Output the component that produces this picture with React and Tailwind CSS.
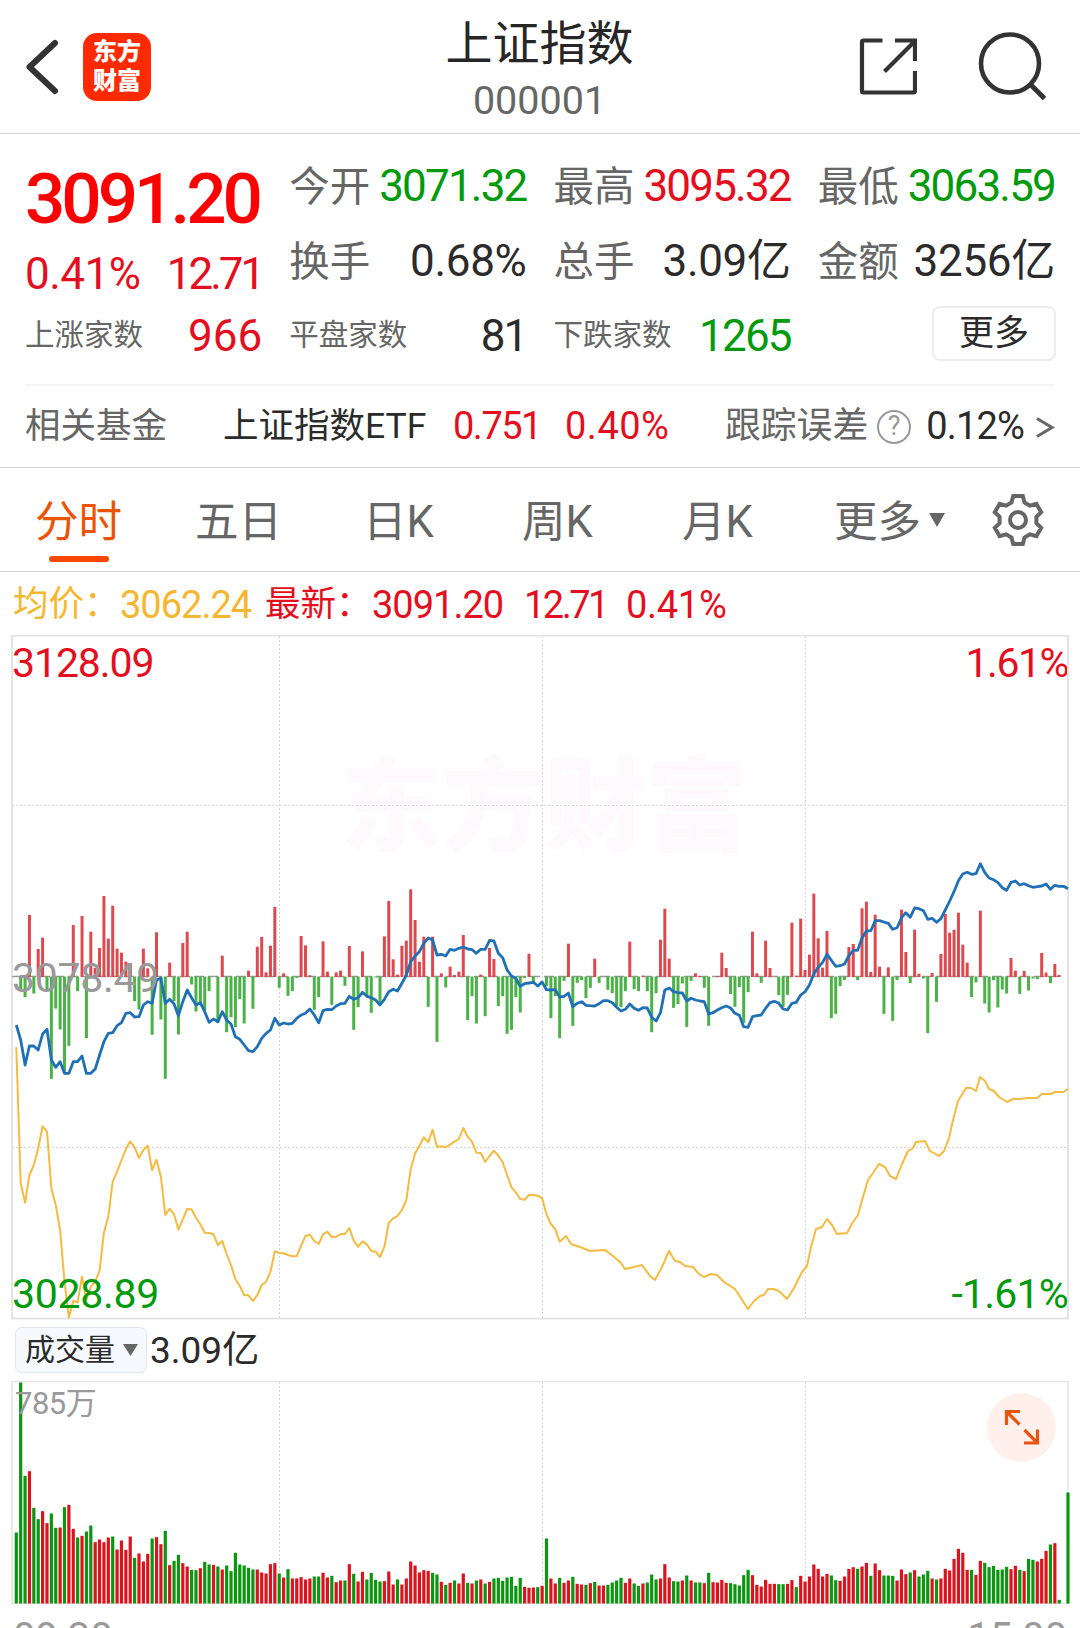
import React from "react";
import clsx from "clsx";

const STEP = 4.382;
const FIRST_X = 16.3;

// All series hold one value per trading minute, in thirds of a pixel.
const MOMENTUM = [
  0, -41, -62, 186, -51, 84, 118, -42, -307, -96,
  -159, -286, -208, 156, -44, 183, -185, 136, 27, 87,
  243, 115, 214, 85, 73, 46, 42, -74, -99, 85,
  26, -175, 134, -129, -307, 43, -74, -174, 102, 136,
  -24, -105, -81, -101, -44, 0, -139, 64, -167, -122,
  -152, -68, -141, 19, -97, 91, 120, 14, 94, 210,
  -34, 11, -58, -44, -4, 123, 95, 5, -100, -62,
  107, 16, -85, 14, 19, -28, 93, -160, -92, 77,
  -61, -109, -3, -78, 122, 228, 53, 7, 94, 109,
  263, 171, 46, 121, -91, 121, -196, 11, -33, 31,
  6, 16, 126, -131, -59, -141, 7, -119, 87, 54,
  -89, -59, -172, -160, -62, -108, -5, 70, -16, 0,
  0, -29, -125, -59, -185, -13, 100, -148, -19, -11,
  -65, -34, 55, -19, 0, -40, -50, -89, -92, -44,
  106, -38, -44, 4, -44, -167, -50, 112, 205, 55,
  -94, -83, -21, -151, -13, 11, 3, -34, -148, 0,
  3, 73, 27, -53, -91, -32, -139, -47, 136, 11,
  -19, 109, 27, 0, -56, -91, -55, 163, 4, 175,
  21, 67, 250, 116, 28, 138, -125, -112, -29, -11,
  90, 99, -11, 206, 226, 15, 187, 31, -112, 29,
  -133, -11, 202, 75, -20, 142, 10, -6, -170, 12,
  -76, 69, 189, 133, 142, 193, 97, 43, -62, -18,
  199, -81, -108, -11, -93, -39, -51, 57, 19, -52,
  18, -42, -6, -8, 72, 13, -20, 39, 6, 0, 0,
];

const PRICE = [
  495, 540, 615, 558, 558, 570, 522, 508, 600, 622,
  605, 640, 640, 605, 605, 588, 640, 640, 627, 585,
  545, 520, 518, 497, 488, 460, 458, 471, 470, 435,
  425, 430, 360, 355, 430, 418, 432, 467, 425, 390,
  413, 435, 428, 455, 487, 477, 485, 455, 480, 492,
  530, 538, 555, 572, 575, 560, 535, 520, 510, 475,
  495, 489, 492, 490, 475, 465, 460, 447, 465, 488,
  452, 448, 449, 438, 431, 430, 409, 418, 413, 397,
  409, 413, 420, 435, 418, 395, 388, 393, 370, 345,
  305, 288, 275, 250, 234, 240, 285, 283, 288, 268,
  271, 265, 261, 267, 269, 280, 268, 268, 241, 243,
  280, 293, 330, 348, 355, 379, 371, 369, 367, 378,
  366, 389, 390, 389, 411, 409, 399, 440, 430, 425,
  436, 437, 438, 431, 422, 422, 428, 442, 453, 448,
  432, 445, 451, 443, 444, 472, 483, 458, 390, 384,
  395, 398, 399, 423, 415, 420, 423, 425, 462, 458,
  450, 443, 438, 444, 460, 466, 500, 502, 470, 467,
  465, 445, 428, 424, 430, 447, 450, 430, 427, 405,
  395, 375, 342, 322, 307, 283, 301, 319, 317, 312,
  287, 271, 271, 235, 213, 212, 182, 182, 186, 190,
  208, 203, 173, 158, 172, 144, 146, 152, 178, 175,
  187, 176, 150, 123, 95, 62, 42, 37, 43, 41,
  11, 37, 54, 59, 68, 83, 91, 67, 63, 75,
  71, 77, 82, 80, 78, 72, 88, 76, 79, 79, 86,
];

const AVERAGE = [
  -38, 370, 428, 345, 315, 265, 199, 215, 385, 435,
  510, 665, 773, 722, 728, 650, 720, 680, 665, 632,
  518, 470, 365, 335, 300, 268, 244, 262, 294, 270,
  257, 330, 299, 350, 465, 446, 463, 509, 478, 447,
  448, 473, 493, 518, 519, 523, 555, 543, 582, 615,
  658, 678, 706, 706, 723, 705, 675, 665, 635, 574,
  579, 580, 585, 589, 589, 557, 528, 524, 543, 552,
  523, 515, 531, 530, 522, 522, 503, 542, 560, 544,
  553, 573, 575, 591, 560, 488, 475, 468, 450, 420,
  328, 280, 258, 232, 247, 209, 260, 259, 262, 254,
  245, 237, 204, 230, 245, 278, 279, 306, 288, 272,
  287, 307, 345, 382, 397, 417, 419, 405, 405, 407,
  415, 463, 492, 508, 545,
];

// Afternoon part of the average line, as [x, y] inside the chart.
const AVERAGE_TAIL = [
  [566, 601], [571, 609], [580, 612], [590, 616], [605, 615], [613, 621],
  [621, 628], [625, 634], [634, 632], [642, 630], [650, 641], [655, 645],
  [662, 632], [669, 616], [675, 626], [680, 627], [685, 631], [693, 632],
  [699, 639], [704, 642], [711, 639], [717, 640], [724, 647], [735, 654],
  [741, 663], [748, 674], [754, 666], [760, 661], [764, 660], [768, 654],
  [773, 654], [779, 656], [787, 664], [794, 653], [802, 637], [807, 631],
  [811, 612], [816, 594], [822, 592], [827, 584], [832, 590], [837, 599],
  [847, 598], [853, 587], [858, 580], [863, 562], [868, 545], [873, 538],
  [879, 529], [885, 532], [890, 541], [896, 544], [902, 529], [908, 516],
  [913, 513], [916, 507], [925, 506], [930, 516], [939, 521], [944, 516],
  [949, 503], [953, 485], [958, 466], [966, 453], [971, 453], [976, 456],
  [980, 442], [985, 446], [989, 454], [994, 456], [999, 462], [1007, 467],
  [1013, 464], [1020, 464], [1028, 463], [1037, 463], [1042, 459],
  [1051, 459], [1055, 457], [1063, 457], [1068, 454],
];

// Positive values close up (red), negative ones close down (green).
const VOLUME = [
  -213, -663, -383, 397, -287, -253, 277, 241, -270, -227,
  228, -289, 296, 224, -198, 203, -216, -234, 184, 192,
  184, 198, -201, 162, 189, 161, 201, -137, 150, 126,
  149, -195, 199, 178, -218, 115, -128, -146, 121, 111,
  -101, -100, 106, -125, -117, 116, -111, 102, -114, -97,
  -152, -117, -114, -107, -102, 102, 93, 90, 118, 121,
  -90, 78, -103, 75, 75, 79, 72, 75, -81, -81,
  92, 78, -83, 64, 69, -69, 118, -89, 66, 95,
  -72, -92, -71, -66, 67, 96, 57, -72, 57, 75,
  126, 114, 93, 100, 98, -92, -87, 65, -56, 62,
  -69, 60, 90, -62, 60, -69, 72, -60, 65, -75,
  -77, -68, -78, -80, -53, -77, 50, 47, 48, -49,
  53, -195, 75, 60, -77, 62, 69, -80, 59, 57,
  -56, 61, -65, 54, 54, -56, -63, -69, -77, 62,
  75, -60, -53, 60, -63, -87, -72, 75, 118, 78,
  -67, -66, 69, -84, 69, -63, -63, 61, -92, 64,
  63, 71, 62, -61, -58, -54, -85, -101, 85, 56,
  51, 71, 59, 59, -58, -58, 59, 70, -49, 83,
  66, 81, 117, 104, 81, 89, -84, -70, 68, 81,
  104, 109, -104, 111, 122, -83, 120, 100, -84, -84,
  -83, 69, 102, 88, -93, 100, -81, -87, -98, 75,
  -72, 75, 104, 99, 134, 164, 152, 101, -101, 86,
  128, -122, -109, -113, -101, -102, -110, 103, 113, -101,
  97, -134, -131, 126, 134, 158, -177, 181, -11, 0, -333,
];

const xAt = (i) => FIRST_X + i * STEP;

const toPoints = (series, top) =>
  series.map((v, i) => `${xAt(i).toFixed(1)},${(top + v / 3).toFixed(1)}`).join(" ");

// Six-toothed outline around 0,0
const gearPoints = Array.from({ length: 6 }, (_, k) => {
  const a = (k * Math.PI) / 3;
  return [[-6.5, -17.5], [-4.8, -24], [4.8, -24], [6.5, -17.5]]
    .map(([x, y]) =>
      [x * Math.cos(a) - y * Math.sin(a), x * Math.sin(a) + y * Math.cos(a)]
        .map((n) => n.toFixed(2))
        .join(",")
    )
    .join(" ");
}).join(" ");

const STATS = [
  [
    { label: "今开", value: "3071.32", color: "text-[#009a0c]", tight: true },
    { label: "换手", value: "0.68%", color: "text-[#2b2b2b]" },
    { label: "平盘家数", value: "81", color: "text-[#2b2b2b]", small: true, tight: true },
  ],
  [
    { label: "最高", value: "3095.32", color: "text-[#e30f20]", tight: true },
    { label: "总手", value: "3.09亿", color: "text-[#2b2b2b]" },
    { label: "下跌家数", value: "1265", color: "text-[#009a0c]", small: true, tight: true },
  ],
  [
    { label: "最低", value: "3063.59", color: "text-[#009a0c]", tight: true },
    { label: "金额", value: "3256亿", color: "text-[#2b2b2b]" },
  ],
];

function Header() {
  return (
    <header className="flex h-[134px] items-center border-b border-[#d4d4d4] pl-[24px] pr-[32px]">
      <div className="flex w-[300px] items-center">
        <svg width="36" height="56" viewBox="0 0 36 56" fill="none" stroke="#333" strokeWidth="6" strokeLinecap="round" strokeLinejoin="round">
          <path d="M31 4 5.500 28l25.500 24" />
        </svg>
        <div className="ml-[23px] flex h-[68px] w-[68px] flex-col items-center justify-center rounded-[14px] bg-[#ff2a00] text-[24px] font-black leading-[29px] text-white">
          <span>东方</span>
          <span>财富</span>
        </div>
      </div>
      <div className="flex flex-1 flex-col items-center pl-[7px] pt-[9px]">
        <h1 className="text-[47px] font-normal leading-[60px] text-[#262626]">上证指数</h1>
        <p className="text-[39.500px] leading-[54px] text-[#666]">000001</p>
      </div>
      <div className="flex w-[300px] items-center justify-end">
        <svg width="60" height="60" viewBox="0 0 60 60" fill="none" stroke="#333" strokeWidth="4.2">
          <path d="M25.500 3.500H6.500A1.500 1.500 0 0 0 5 5V54a1.500 1.500 0 0 0 1.500 1.500h50A1.500 1.500 0 0 0 58 54V34" />
          <path d="M38 3.500h20v20.500M27.500 34.500 57.500 4.500" />
        </svg>
        <svg className="ml-[61px]" width="70" height="70" viewBox="0 0 70 70" fill="none" stroke="#333" strokeWidth="4.6">
          <circle cx="32" cy="31.500" r="29" />
          <path d="M52 52 66.500 66.500" strokeWidth="5" />
        </svg>
      </div>
    </header>
  );
}

function Stat({ label, value, color, small, tight }) {
  return (
    <div className="flex h-[75px] items-center justify-between whitespace-nowrap">
      <span className={clsx("text-[#666]", small ? "text-[29.5px]" : "pt-[3px] text-[40.5px]")}>{label}</span>
      <span className={clsx("pt-px text-[44px]", tight ? "tracking-[-1.8px]" : "tracking-[-0.3px]", color)}>{value}</span>
    </div>
  );
}

function Quote() {
  return (
    <section className="border-b border-[#d4d4d4]">
      <div className="grid h-[250px] grid-cols-4 gap-x-[27px] px-[25px] pt-[14px]">
        <div className="flex flex-col whitespace-nowrap pt-[12px] text-[#e30f20]">
          <div className="flex h-[75px] items-center pt-[4px] text-[71px] font-medium tracking-[-4px] text-[#ff0000]">3091.20</div>
          <div className="flex h-[75px] items-center justify-between pt-[2px] text-[44px]">
            <span className="tracking-[-0.500px]">0.41%</span>
            <span className="tracking-[-3px]">12.71</span>
          </div>
          <div className="flex h-[51px] items-center justify-between">
            <span className="text-[29.5px] text-[#666]">上涨家数</span>
            <span className="pt-px text-[44px]">966</span>
          </div>
        </div>
        {STATS.map((column, i) => (
          <div key={i} className="flex flex-col">
            {column.map((stat) => (
              <Stat key={stat.label} {...stat} />
            ))}
            {i === 2 && (
              <button className="-mr-px ml-auto mt-[8px] h-[55px] w-[124px] rounded-[8px] border-2 border-[#ededf0] text-[35px] leading-[52px] text-[#2b2b2b]">
                更多
              </button>
            )}
          </div>
        ))}
      </div>
      <div className="mx-[25px] flex h-[83px] items-center whitespace-nowrap border-t-2 border-[#f5f5f5] text-[38px] tracking-[-0.8px]">
        <span className="text-[35.500px] tracking-normal text-[#666]">相关基金</span>
        <span className="ml-[56px] w-[230px] text-[35.500px] tracking-normal text-[#2b2b2b]">上证指数ETF</span>
        <span className="w-[112px] tracking-[-1.500px] text-[#e30f20]">0.751</span>
        <span className="w-[160px] tracking-[0.500px] text-[#e30f20]">0.40%</span>
        <span className="text-[35.800px] tracking-normal text-[#666]">跟踪误差</span>
        <span className="ml-[9px] flex h-[34px] w-[34px] items-center justify-center rounded-full border-[2.500px] border-[#999] text-[27px] tracking-normal text-[#999]">?</span>
        <span className="ml-[15px] text-[#2b2b2b]">0.12%</span>
        <svg className="ml-auto" width="20" height="24" viewBox="0 0 20 24" fill="none" stroke="#666" strokeWidth="3">
          <path d="M2 3.500 17 12.500 2 21.500" />
        </svg>
      </div>
    </section>
  );
}

function Tabs() {
  return (
    <nav className="flex h-[104px] items-center whitespace-nowrap border-b border-[#d4d4d4] pl-[35px] text-[43.500px] text-[#666]">
      <div className="relative w-[160px] pt-[6px] text-[#ea5504]">
        分时
        <span className="absolute -bottom-[7px] left-[14px] h-[6px] w-[60px] rounded-full bg-[#f84800]" />
      </div>
      <div className="w-[168px] pt-[6px]">五日</div>
      <div className="w-[159px] pt-[6px]">日K</div>
      <div className="w-[160px] pt-[6px]">周K</div>
      <div className="w-[152px] pt-[6px]">月K</div>
      <div className="flex w-[157px] items-center">
        <span className="pt-[6px]">更多</span>
        <svg className="ml-[8px]" width="16" height="14" viewBox="0 0 16 14">
          <path d="M0 0h16L8 14z" fill="#666" />
        </svg>
      </div>
      <svg width="54" height="54" viewBox="-27 -27 54 54" fill="none" stroke="#666" strokeWidth="4">
        <polygon points={gearPoints} />
        <circle r="8" />
      </svg>
    </nav>
  );
}

function PriceChart() {
  const tail = AVERAGE_TAIL.map((p) => p.join(",")).join(" ");
  return (
    <div className="relative h-[685px] text-[41px] leading-[48px] tracking-[-0.8px]">
      <div className="absolute left-[340px] top-[98px] text-[102px] font-black leading-[150px] tracking-normal text-[#fdf9fc]">东方财富</div>
      <span className="absolute left-[12px] top-[4px] tracking-[-1.100px] text-[#e30f20]">3128.09</span>
      <span className="absolute right-[12px] top-[4px] tracking-[-1.500px] text-[#e30f20]">1.61%</span>
      <svg className="absolute left-0 top-0" width="1080" height="685" viewBox="0 0 1080 685" fill="none">
        <g stroke="#d6d6d6" strokeDasharray="2 2">
          <path d="M279.500 1v682M542.500 1v682M805.500 1v682M12 170.500h1056M12 512.500h1056" />
        </g>
        <rect x="12" y="0.500" width="1056" height="683" stroke="#e4e4e4" strokeWidth="2" />
        <path d="M12 341.500h1050" stroke="#999" strokeWidth="1.500" strokeDasharray="10 4" />
        {MOMENTUM.map((v, i) =>
          v === 0 ? null : (
            <rect
              key={i}
              x={xAt(i) - 1.5}
              y={v > 0 ? 342 - v / 3 : 341.5}
              width="3"
              height={Math.abs(v) / 3}
              fill={v > 0 ? "#dc4a50" : "#4bb148"}
            />
          )
        )}
        <polyline points={`${toPoints(AVERAGE, 425)} ${tail}`} stroke="#f4bb42" strokeWidth="2" strokeLinejoin="round" />
        <polyline points={toPoints(PRICE, 225)} stroke="#1f70b4" strokeWidth="2.800" strokeLinejoin="round" />
      </svg>
      <span className="absolute left-[12px] top-[319px] tracking-[-0.300px] text-[#999]">3078.49</span>
      <span className="absolute bottom-[2px] left-[12px] tracking-[-0.300px] text-[#009a0c]">3028.89</span>
      <span className="absolute bottom-[2px] right-[12px] text-[#009a0c]">-1.61%</span>
    </div>
  );
}

function VolumeChart() {
  return (
    <div className="relative h-[223px]">
      <svg className="block" width="1080" height="223" viewBox="0 0 1080 223" fill="none">
        <path d="M279.500 1v221M542.500 1v221M805.500 1v221" stroke="#d6d6d6" strokeDasharray="2 2" />
        <rect x="12" y="0.500" width="1056" height="222" stroke="#e4e4e4" strokeWidth="1.500" />
        {VOLUME.map((v, i) => (
          <rect
            key={i}
            x={xAt(i) - 1.6}
            y={222.5 - Math.abs(v) / 3}
            width="3.200"
            height={Math.abs(v) / 3}
            fill={v > 0 ? "#d9141f" : "#0b9510"}
          />
        ))}
      </svg>
      <span className="absolute left-[15px] top-[3px] text-[31px] leading-[40px] tracking-[-0.500px] text-[#999]">785万</span>
      <button className="absolute right-[24px] top-[12px] h-[69px] w-[69px] rounded-full bg-[#fff0eb]">
        <svg width="69" height="69" viewBox="0 0 69 69" fill="none" stroke="#e9530c" strokeWidth="3.200">
          <path d="M33 18.500H19.500V32M20 19l12.500 12.500M50.500 36.500V50H37M50 49.500 37.500 37" />
        </svg>
      </button>
    </div>
  );
}

export default function App() {
  return (
    <main className="h-[1628px] w-[1080px] overflow-hidden bg-white font-['Roboto','Noto_Sans_CJK_SC',sans-serif]">
      <Header />
      <Quote />
      <Tabs />
      <div className="flex h-[63px] items-center whitespace-nowrap pl-[13px] pt-[3px] text-[38px] tracking-[-1px] text-[#e30f20]">
        <span className="w-[107px] text-[35.500px] tracking-normal text-[#f5b731]">均价：</span>
        <span className="w-[145px] text-[#f5b731]">3062.24</span>
        <span className="w-[107px] text-[35.500px] tracking-normal">最新：</span>
        <span className="w-[152px]">3091.20</span>
        <span className="w-[102px] tracking-[-2.500px]">12.71</span>
        <span className="tracking-[-0.300px]">0.41%</span>
      </div>
      <PriceChart />
      <div className="flex h-[61px] items-center pl-[15px]">
        <button className="-mt-[2px] flex h-[46px] w-[132px] items-center rounded-[7px] border border-[#e0e6ee] bg-[#f6faff] pl-[9px] text-[30px] text-[#2b2b2b]">
          成交量
          <svg className="ml-[8px]" width="15" height="12" viewBox="0 0 15 12">
            <path d="M0 0h15L7.500 12z" fill="#666" />
          </svg>
        </button>
        <span className="ml-[3px] text-[37px] text-[#2b2b2b]">3.09亿</span>
      </div>
      <VolumeChart />
      <div className="flex justify-between px-[13px] pt-[7px] text-[40px] leading-[54px] text-[#999]">
        <span>09:30</span>
        <span>15:00</span>
      </div>
    </main>
  );
}
